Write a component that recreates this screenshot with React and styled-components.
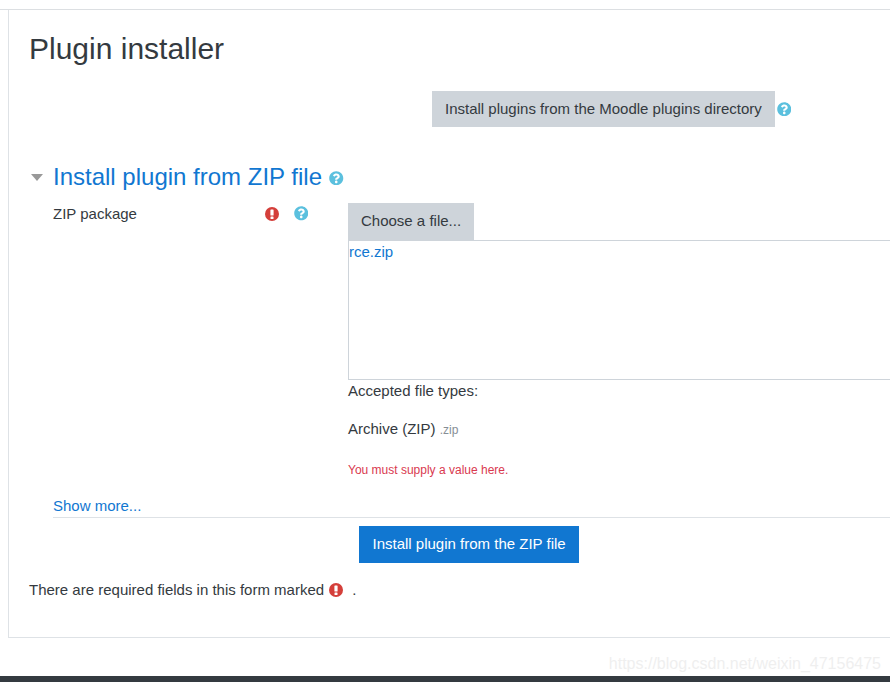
import React from "react";
import styled, { createGlobalStyle } from "styled-components";
import { FaQuestionCircle } from "react-icons/fa";

const GlobalStyle = createGlobalStyle`
  html, body {
    margin: 0;
    padding: 0;
    height: 682px;
    overflow: hidden;
    background: #fff;
  }
  body {
    font-family: "Liberation Sans", Arial, sans-serif;
    font-size: 15px;
    color: #343a40;
  }
`;

const Page = styled.div`
  position: relative;
  width: 890px;
  height: 682px;
  overflow: hidden;
  display: flex;
  flex-direction: column;
`;

const TopBar = styled.div`
  height: 9px;
  border-bottom: 1px solid #dcdfe2;
  box-shadow: 0 -1px 1px rgba(0, 0, 0, 0.03);
  flex: none;
`;

const Card = styled.main`
  box-sizing: border-box;
  width: 900px;
  height: 628px;
  margin-left: 8px;
  padding: 19px 0 0 20px;
  border: 1px solid #dee2e6;
  border-top: none;
  flex: none;
`;

const Title = styled.h2`
  margin: 0;
  font-size: 30px;
  line-height: 40px;
  font-weight: 400;
  color: #343a40;
`;

const DirectoryRow = styled.div`
  display: flex;
  align-items: center;
  margin: 22px 0 0 403px;
`;

const Button = styled.button`
  border: none;
  border-radius: 0;
  font-family: inherit;
  font-size: 15px;
  line-height: 22px;
  padding: ${(p) => p.$pad};
  background: ${(p) => (p.$primary ? "#1177d1" : "#ced4da")};
  color: ${(p) => (p.$primary ? "#fff" : "#343a40")};
`;

const HelpIcon = styled(FaQuestionCircle)`
  color: #5bc0de;
  font-size: 14.5px;
  flex: none;
`;

const RequiredSvg = styled.svg`
  width: 14px;
  height: 14px;
  flex: none;
`;

function RequiredIcon({ className }) {
  return (
    <RequiredSvg className={className} viewBox="0 0 14 14">
      <circle cx="7" cy="7" r="7" fill="#d43f3a" />
      <rect x="5.4" y="2.4" width="3.2" height="6.2" rx="0.7" fill="#fff" />
      <rect x="5.5" y="9.6" width="3" height="2.3" rx="0.5" fill="#fff" />
    </RequiredSvg>
  );
}

const DirectoryHelp = styled(HelpIcon)`
  margin-left: 2px;
`;

const SectionHead = styled.div`
  display: flex;
  align-items: center;
  margin-top: 35px;
  height: 30px;
`;

const Caret = styled.span`
  width: 0;
  height: 0;
  border-left: 6.5px solid transparent;
  border-right: 6.5px solid transparent;
  border-top: 7px solid #999;
  margin: 0 10px 0 2px;
`;

const SectionTitle = styled.h3`
  margin: 0 7px 0 0;
  font-size: 24px;
  line-height: 30px;
  font-weight: 400;
  color: #1177d1;
`;

const SectionHelp = styled(HelpIcon)`
  margin-top: 2px;
`;

const FormRow = styled.div`
  display: grid;
  grid-template-columns: 319px 1fr;
  margin-top: 11px;
`;

const LabelCell = styled.div`
  display: flex;
  align-items: flex-start;
  padding: 2px 0 0 24px;
`;

const Label = styled.label`
  width: 212px;
  line-height: 18px;
`;

const LabelIcons = styled.span`
  display: flex;
  gap: 14.5px;
  align-items: center;
  height: 17px;
`;

const FileBox = styled.div`
  box-sizing: border-box;
  width: 560px;
  height: 140px;
  border: 1px solid #ced4da;
  padding: 2px 0;
  line-height: 18px;
`;

const Link = styled.a`
  color: #1177d1;
  text-decoration: none;
`;

const Accepted = styled.div`
  margin-top: 2px;
  line-height: 18px;
`;

const FileType = styled.div`
  margin-top: 20px;
  line-height: 18px;
`;

const Ext = styled.small`
  font-size: 12px;
  color: #868e96;
`;

const ErrorText = styled.div`
  margin-top: 23px;
  font-size: 12px;
  line-height: 16px;
  color: #d9394f;
`;

const ShowMore = styled.div`
  margin: 19px 0 0 24px;
  padding-bottom: 2px;
  line-height: 18px;
  border-bottom: 1px solid #dee2e6;
`;

const Actions = styled.div`
  margin: 8px 0 0 330px;
`;

const Footnote = styled.p`
  display: flex;
  align-items: center;
  margin: 18px 0 0;
  line-height: 18px;
`;

const FootIcon = styled(RequiredIcon)`
  margin: -1px 9px 0 5px;
`;

const DarkFooter = styled.footer`
  margin-top: 38px;
  height: 6px;
  background: #343a40;
  flex: none;
`;

const Watermark = styled.span`
  position: absolute;
  right: 9px;
  top: 655px;
  font-size: 16px;
  line-height: 18px;
  color: #efefef;
`;

export default function App() {
  return (
    <Page>
      <GlobalStyle />
      <TopBar />
      <Card>
        <Title>Plugin installer</Title>
        <DirectoryRow>
          <Button $pad="7px 13px">Install plugins from the Moodle plugins directory</Button>
          <DirectoryHelp />
        </DirectoryRow>
        <SectionHead>
          <Caret />
          <SectionTitle>Install plugin from ZIP file</SectionTitle>
          <SectionHelp />
        </SectionHead>
        <FormRow>
          <LabelCell>
            <Label>ZIP package</Label>
            <LabelIcons>
              <RequiredIcon />
              <HelpIcon />
            </LabelIcons>
          </LabelCell>
          <div>
            <Button $pad="7px 13px 8px">Choose a file...</Button>
            <FileBox>
              <Link href="#">rce.zip</Link>
            </FileBox>
            <Accepted>Accepted file types:</Accepted>
            <FileType>
              Archive (ZIP) <Ext>.zip</Ext>
            </FileType>
            <ErrorText>You must supply a value here.</ErrorText>
          </div>
        </FormRow>
        <ShowMore>
          <Link href="#">Show more...</Link>
        </ShowMore>
        <Actions>
          <Button $primary $pad="7px 13.5px 8px">Install plugin from the ZIP file</Button>
        </Actions>
        <Footnote>
          There are required fields in this form marked
          <FootIcon />.
        </Footnote>
      </Card>
      <DarkFooter />
      <Watermark>https://blog.csdn.net/weixin_47156475</Watermark>
    </Page>
  );
}
